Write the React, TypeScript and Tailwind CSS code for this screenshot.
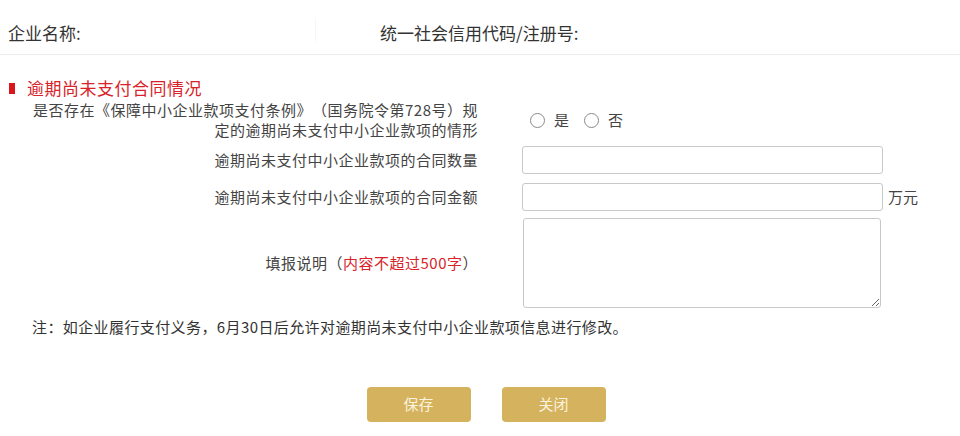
import React from "react";

function Radio({ label }: { label: string }) {
  return (
    <div className="flex items-center gap-[9px]">
      <span className="block w-[15px] h-[15px] rounded-full border border-[#8a8a8a] bg-white" />
      <span className="text-[15px] text-[#444]">{label}</span>
    </div>
  );
}

export default function App() {
  return (
    <div className="w-[960px] h-[436px] bg-white overflow-hidden font-['Noto_Sans_CJK_SC','Noto_Sans',sans-serif] text-[#444] [text-spacing-trim:space-all]">
      {/* header */}
      <div className="h-[55px] flex border-b border-[#ececec]">
        <div className="w-[315px] pl-[8px] pt-[23px] text-[17px] leading-[20px] text-[#333]">
          企业名称:
        </div>
        <div className="mt-[18px] mb-[12px] border-l border-[#f7f7f7]" />
        <div className="pl-[64px] pt-[23px] text-[17px] leading-[20px] text-[#333]">
          统一社会信用代码/注册号:
        </div>
      </div>

      {/* section title */}
      <div className="mt-[23px] flex items-center h-[20px]">
        <span className="block ml-[9px] w-[6px] h-[11px] bg-[#d8161b]" />
        <span className="ml-[12px] text-[17px] leading-[20px] tracking-[0.5px] text-[#d8232a]">
          逾期尚未支付合同情况
        </span>
      </div>

      {/* question row */}
      <div className="mt-[2px] flex items-center h-[40px]">
        <div className="w-[478px] text-right text-[15px] leading-[20px] tracking-[0.5px] whitespace-nowrap">
          是否存在《保障中小企业款项支付条例》（国务院令第728号）规
          <br />
          定的逾期尚未支付中小企业款项的情形
        </div>
        <div className="ml-[52px] flex items-center gap-[15px]">
          <Radio label="是" />
          <Radio label="否" />
        </div>
      </div>

      {/* input 1 */}
      <div className="mt-[6px] flex items-center h-[28px]">
        <div className="w-[478px] text-right text-[15px] leading-[20px] tracking-[0.5px] whitespace-nowrap">
          逾期尚未支付中小企业款项的合同数量
        </div>
        <input
          readOnly
          className="ml-[44px] w-[361px] h-[28px] border border-[#c9c9c9] rounded-[3px] bg-white outline-none"
        />
      </div>

      {/* input 2 */}
      <div className="mt-[9px] flex items-center h-[28px]">
        <div className="w-[478px] text-right text-[15px] leading-[20px] tracking-[0.5px] whitespace-nowrap">
          逾期尚未支付中小企业款项的合同金额
        </div>
        <input
          readOnly
          className="ml-[44px] w-[361px] h-[28px] border border-[#c9c9c9] rounded-[3px] bg-white outline-none"
        />
        <span className="ml-[5px] text-[15px] text-[#444]">万元</span>
      </div>

      {/* textarea */}
      <div className="mt-[7px] flex items-center h-[90px]">
        <div className="w-[478px] text-right text-[15px] leading-[20px] tracking-[0.5px] whitespace-nowrap">
          填报说明（<span className="text-[#d8232a]">内容不超过500字</span>）
        </div>
        <textarea
          readOnly
          className="ml-[45px] w-[358px] h-[90px] border border-[#c9c9c9] rounded-[3px] bg-white outline-none"
        />
      </div>

      {/* note */}
      <div className="mt-[9px] pl-[32px] text-[15px] leading-[20px] tracking-[0.4px] text-[#333] whitespace-nowrap">
        注：如企业履行支付义务，6月30日后允许对逾期尚未支付中小企业款项信息进行修改。
      </div>

      {/* buttons */}
      <div className="mt-[50px] flex justify-center gap-[31px] pl-[12px]">
        <button className="w-[104px] h-[35px] rounded-[4px] bg-[#d5b25d] text-[15px] text-[#fbf3dd]">
          保存
        </button>
        <button className="w-[104px] h-[35px] rounded-[4px] bg-[#d5b25d] text-[15px] text-[#fbf3dd]">
          关闭
        </button>
      </div>
    </div>
  );
}
